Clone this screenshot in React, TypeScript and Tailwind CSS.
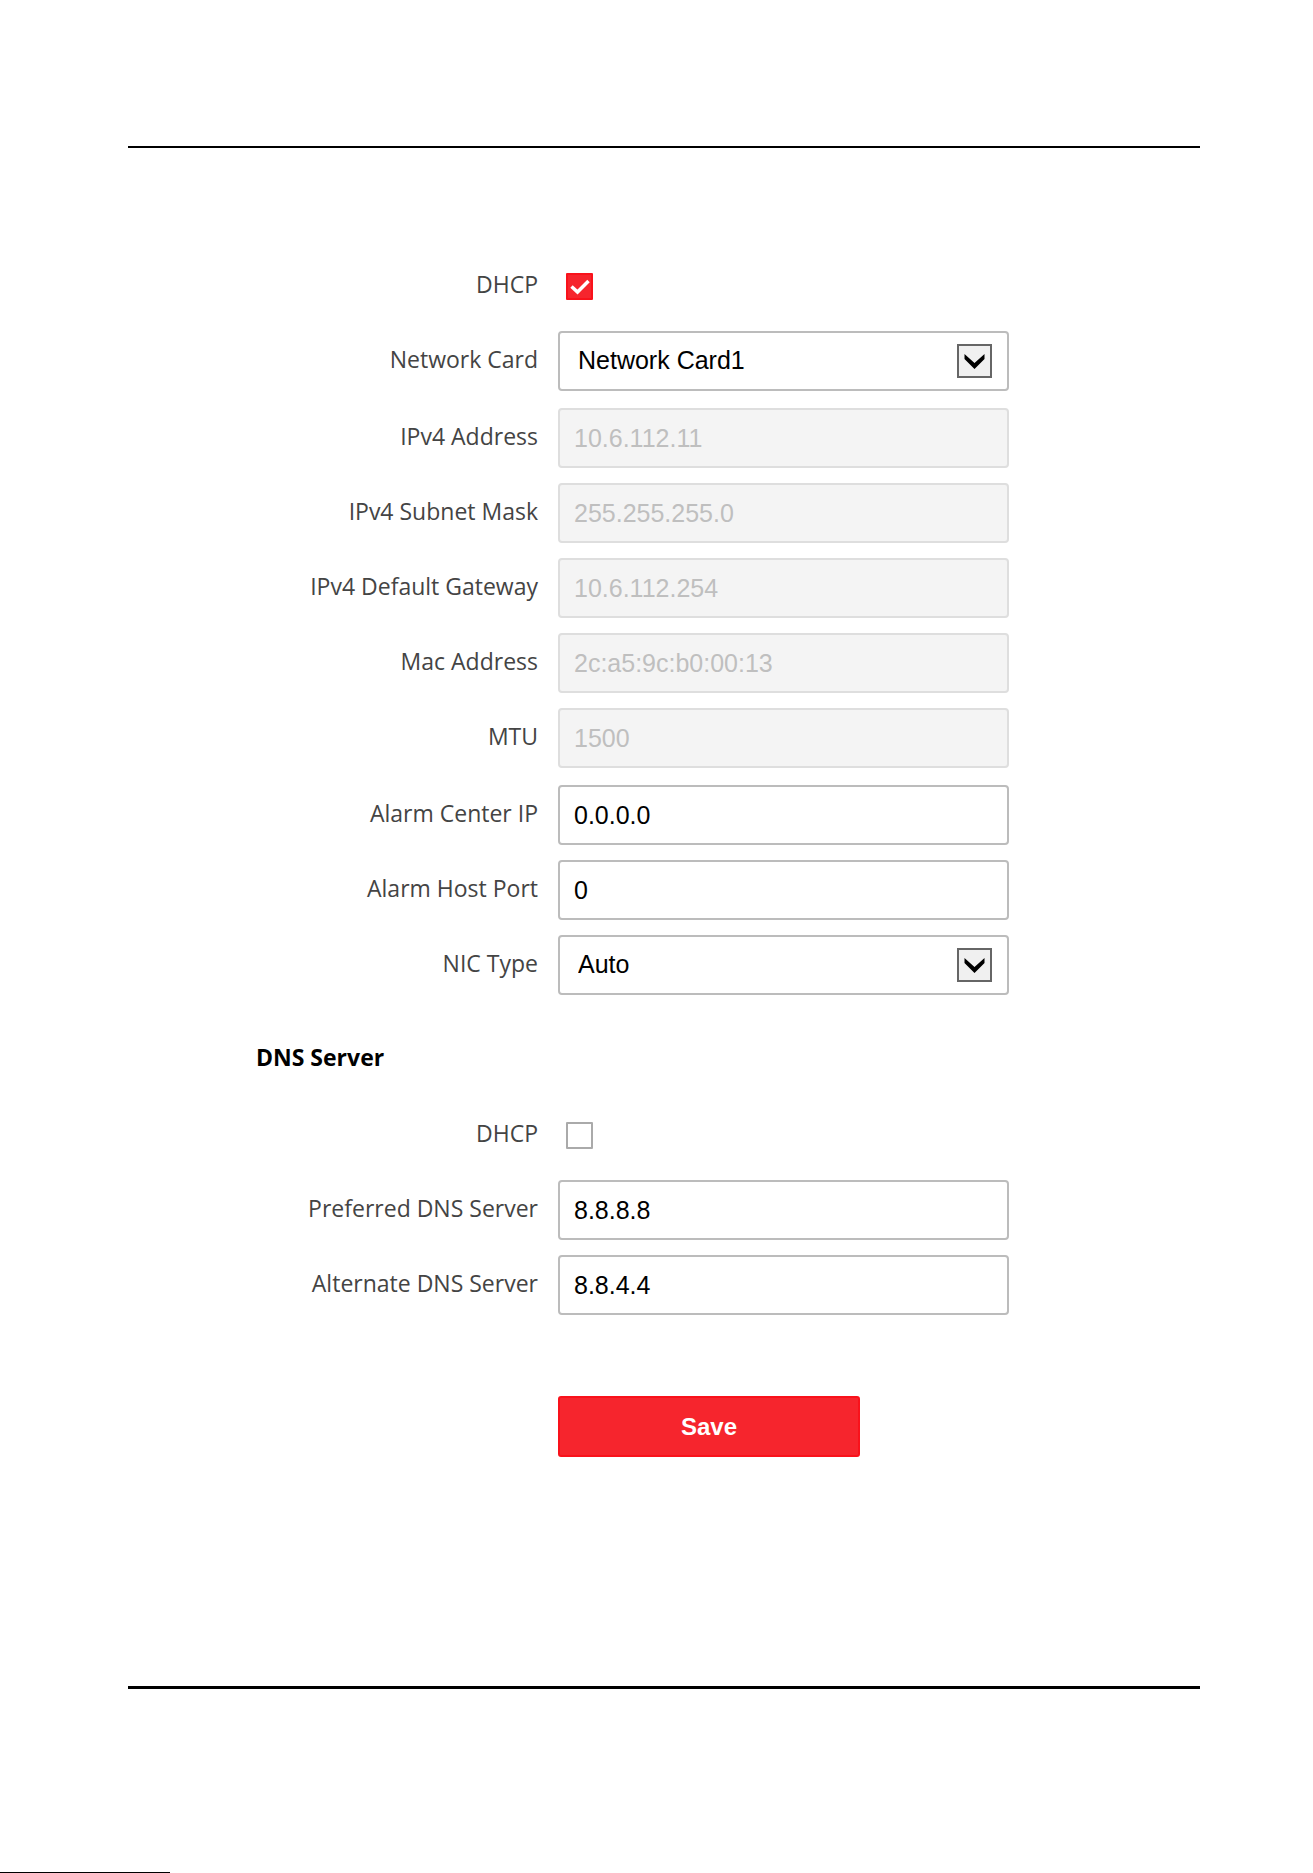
import { useState } from 'react';
import type { ReactNode } from 'react';

const fieldStyle =
  "h-[60px] w-full rounded-[4px] border-2 border-[#bcbcbc] bg-white font-['Liberation_Sans',Arial,sans-serif] text-[25px] text-black disabled:border-[#dedede] disabled:bg-[#f4f4f4] disabled:text-[#bfbfbf] disabled:opacity-100";

function Row({ id, label, children }: { id: string; label: string; children: ReactNode }) {
  return (
    <div className="grid min-h-[60px] grid-cols-[282px_minmax(0,451px)] items-center gap-5">
      <label htmlFor={id} className="pb-[5px] text-right text-[23px] leading-8 text-[#444]">
        {label}
      </label>
      <div>{children}</div>
    </div>
  );
}

function TextRow({ id, label, value, disabled }: { id: string; label: string; value: string; disabled?: boolean }) {
  return (
    <Row id={id} label={label}>
      <input id={id} type="text" defaultValue={value} disabled={disabled} className={`${fieldStyle} block px-[14px]`} />
    </Row>
  );
}

function SelectRow({ id, label, options }: { id: string; label: string; options: string[] }) {
  return (
    <Row id={id} label={label}>
      <div className="relative">
        <select id={id} className={`${fieldStyle} block appearance-none pr-14 pl-[18px]`}>
          {options.map((option) => (
            <option key={option}>{option}</option>
          ))}
        </select>
        <svg className="pointer-events-none absolute top-[13px] right-[17px] h-[34px] w-[35px]" viewBox="0 0 35 34">
          <rect x="1" y="1" width="33" height="32" fill="#f0f0f0" stroke="#666" strokeWidth="2" />
          <path d="M7.5 10 17.5 19 27.5 10V15L17.5 25 7.5 15Z" fill="#000" />
        </svg>
      </div>
    </Row>
  );
}

function CheckRow({ id, label, initial }: { id: string; label: string; initial: boolean }) {
  const [checked, setChecked] = useState(initial);

  return (
    <Row id={id} label={label}>
      <div className="relative ml-2 h-[27px] w-[27px]">
        <input
          id={id}
          type="checkbox"
          checked={checked}
          onChange={(e) => setChecked(e.target.checked)}
          className="block h-[27px] w-[27px] appearance-none rounded-[1px] border-2 border-[#aaa] bg-white checked:border-[#f9121b] checked:bg-[#f6252d]"
        />
        {checked && (
          <svg className="pointer-events-none absolute inset-0" viewBox="0 0 27 27" fill="none">
            <path d="M5.5 13.5 11.5 19 22.5 8" stroke="#fff" strokeWidth="3.5" />
          </svg>
        )}
      </div>
    </Row>
  );
}

export default function App() {
  return (
    <div className="flex min-h-screen flex-col bg-white font-['Open_Sans','Noto_Sans',sans-serif]">
      <main className="mt-[146px] mr-[113px] ml-32 border-t-2 border-b-3 border-black pt-[108px] pb-[229px] pl-32">
        <form onSubmit={(e) => e.preventDefault()}>
          <div className="flex flex-col gap-[17px]">
            <div className="flex flex-col gap-[15px]">
              <CheckRow id="dhcp" label="DHCP" initial={true} />
              <SelectRow id="network-card" label="Network Card" options={['Network Card1', 'Network Card2']} />
            </div>

            <div className="flex flex-col gap-[15px]">
              <TextRow id="ipv4-address" label="IPv4 Address" value="10.6.112.11" disabled />
              <TextRow id="ipv4-mask" label="IPv4 Subnet Mask" value="255.255.255.0" disabled />
              <TextRow id="ipv4-gateway" label="IPv4 Default Gateway" value="10.6.112.254" disabled />
              <TextRow id="mac-address" label="Mac Address" value="2c:a5:9c:b0:00:13" disabled />
              <TextRow id="mtu" label="MTU" value="1500" disabled />
            </div>

            <div className="flex flex-col gap-[15px]">
              <TextRow id="alarm-ip" label="Alarm Center IP" value="0.0.0.0" />
              <TextRow id="alarm-port" label="Alarm Host Port" value="0" />
              <SelectRow id="nic-type" label="NIC Type" options={['Auto', '10M Half-dup', '100M Full-dup']} />
            </div>
          </div>

          <h2 className="mt-[46px] text-[23px] leading-8 font-bold text-black">DNS Server</h2>

          <div className="mt-8 flex flex-col gap-[15px]">
            <CheckRow id="dns-dhcp" label="DHCP" initial={false} />
            <TextRow id="preferred-dns" label="Preferred DNS Server" value="8.8.8.8" />
            <TextRow id="alternate-dns" label="Alternate DNS Server" value="8.8.4.4" />
          </div>

          <button
            type="submit"
            className="mt-[81px] ml-[302px] block h-[61px] w-[302px] rounded-[3px] border-2 border-[#f9121b] bg-[#f6252d] font-['Liberation_Sans',Arial,sans-serif] text-2xl font-bold text-white"
          >
            Save
          </button>
        </form>
      </main>

      <footer className="mt-auto h-px w-[170px] bg-black" />
    </div>
  );
}
